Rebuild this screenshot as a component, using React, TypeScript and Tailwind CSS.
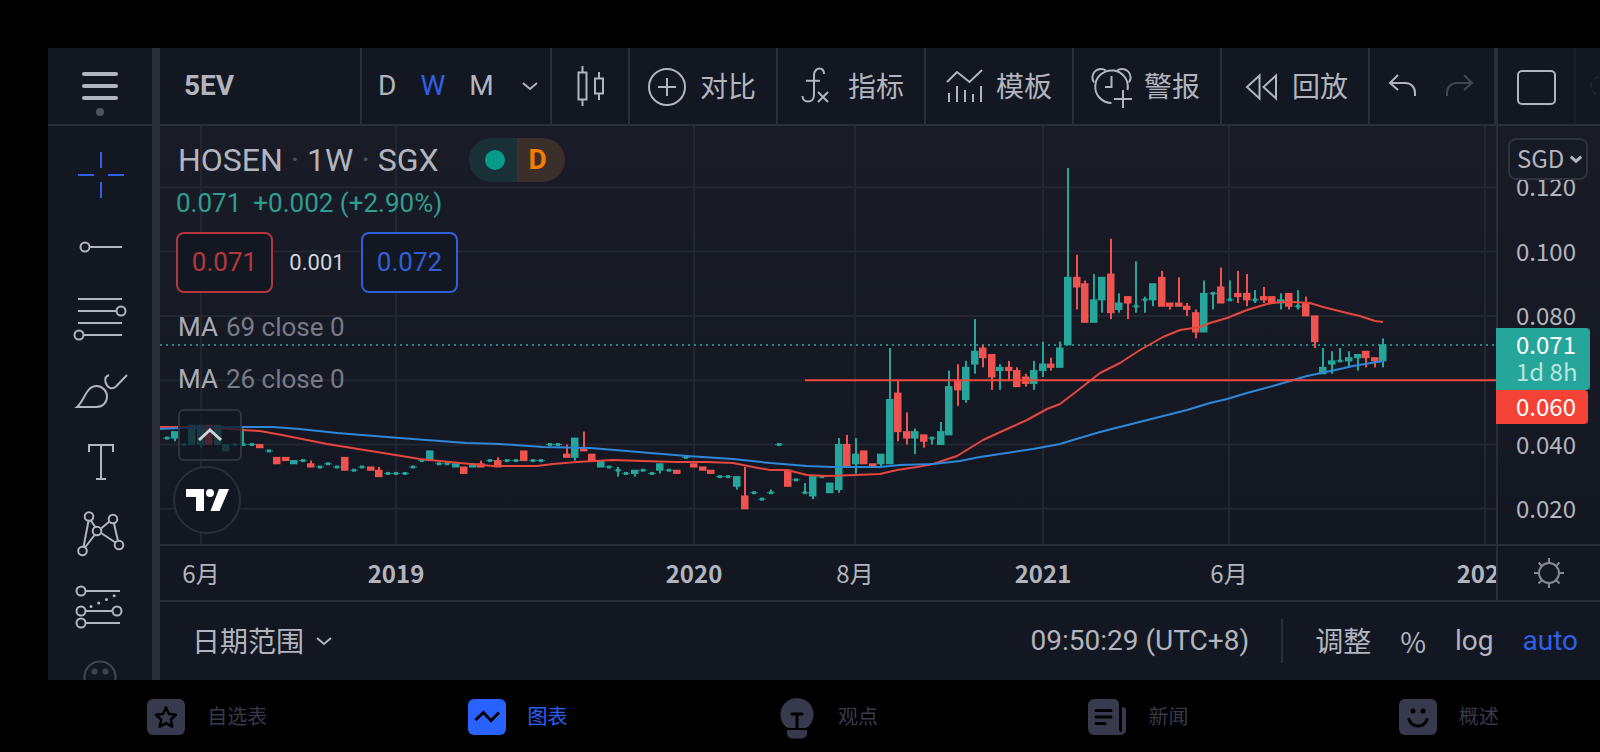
import { useState } from 'react';
import type { ReactNode } from 'react';

const PLOT_W = 1336;
const PLOT_H = 418;
const FIRST_X = 6.8;
const STEP_X = 8.505;

// prices are kept in thousandths
const priceY = (p: number) => 447.1 - 3.215 * p;

// [open, high, low, close]
type Candle = [number, number, number, number];

const flat = (p: number, high = p, low = p): Candle => [p, high, low, p];

const CANDLES: Candle[] = [
  flat(42), [42, 44, 41, 44], flat(40), [40, 46, 40, 46], [40, 46, 39, 46], [46, 46, 40, 40],
  [40, 46, 40, 46], [38, 40, 38, 40], flat(40), flat(40, 45), flat(40), [40, 40, 39, 39],
  flat(38), [36, 36, 34, 34], [36, 36, 35, 35], [34, 35, 34, 35], flat(35), [34, 35, 33, 33],
  flat(33), flat(34), flat(33), [36, 36, 32, 32], flat(32), flat(33), [33, 33, 32, 32],
  [32, 33, 30, 30], flat(31), flat(31), flat(31), flat(33), flat(35), [35, 38, 35, 38],
  flat(34), flat(34), [33, 34, 33, 34], [33, 33, 31, 31], [33, 34, 33, 34], [34, 35, 33, 33],
  flat(35), [35, 36, 33, 33], flat(35), flat(35), [38, 38, 35, 35], flat(35), flat(35),
  flat(40), flat(40), [37, 40, 36, 36], [36, 42, 35, 42], [39, 44, 38, 38], [37, 37, 35, 35],
  [33, 35, 33, 35], flat(33), flat(32, 33, 30), flat(31), [31, 32, 30, 32], flat(32), flat(31),
  [32, 34, 31, 34], flat(32), [32, 32, 31, 31], flat(36), [34, 34, 33, 33], [33, 33, 32, 32],
  [32, 32, 31, 31], flat(30), flat(30), [27, 30, 26, 30], [24, 33, 20, 20], flat(25), flat(23),
  flat(25, 26), flat(40), [32, 32, 27, 27], flat(29), flat(25, 28), [24, 30, 23, 30], flat(30),
  [25, 28, 25, 28], [26, 42, 25, 40], [40, 43, 33, 33], [34, 42, 31, 37], [38, 38, 34, 34],
  [34, 34, 33, 33], [34, 37, 33, 37], [34, 70, 34, 54], [56, 60, 41, 44], [44, 50, 40, 42],
  [42, 45, 37, 44], [43, 43, 39, 41], flat(42, 42, 40), [40, 47, 40, 44], [43, 63, 43, 58],
  [60, 65, 52, 57], [54, 66, 53, 64], [65, 79, 62, 69], [70, 71, 64, 67], [68, 68, 57, 61],
  [63, 65, 57, 64], [64, 66, 60, 63], [63, 64, 58, 58], [61, 62, 58, 59], [59, 66, 57, 63],
  [63, 72, 61, 65], [65, 67, 63, 64], [64, 72, 64, 70], [71, 126, 71, 92], [92, 99, 82, 89],
  [90, 91, 78, 78], [78, 93, 78, 85], [85, 92, 81, 92], [93, 104, 79, 81], [82, 87, 81, 84],
  [86, 86, 79, 84], flat(83, 97, 81), flat(85, 86, 81), [85, 90, 83, 90], [92, 94, 83, 83],
  [84, 84, 82, 83], [84, 92, 83, 83], [83, 84, 80, 82], [81, 82, 73, 75], [75, 91, 75, 87],
  flat(87, 87, 82), [89, 95, 84, 84], flat(85, 91), [87, 94, 84, 86], [87, 93, 83, 85],
  flat(85, 88, 84), [86, 89, 84, 85], [86, 86, 84, 84], [84, 87, 82, 85], [87, 87, 82, 83],
  flat(83, 88, 82), [84, 86, 80, 80], [80, 80, 70, 72], [62, 70, 62, 64], [65, 69, 62, 66],
  flat(66, 70), [66, 69, 64, 67], [67, 68, 63, 68], [69, 69, 64, 67], [67, 67, 64, 66],
  [66, 73, 64, 71],
];

const MA_26 =
  '0,301 18,301 60,302 82,304 100,305 122,309 167,318 217,326 260,333 300,337 333,340 360,340 377,340 393,338 417,336 453,334 483,335 517,336 547,336 573,337 593,341 610,344 627,344 647,349 667,350 695,349 720,348 737,344 757,341 773,338 797,330 823,314 847,303 867,294 887,283 900,278 917,265 940,247 960,237 980,224 1003,211 1020,204 1040,201 1050,197 1067,192 1087,184 1107,178 1120,176 1133,176 1150,177 1163,181 1187,187 1200,190 1215,195 1223,196';
const MA_69 =
  '0,303 18,302 82,301 113,301 140,303 177,307 227,311 253,313 307,317 340,318 383,321 430,322 467,325 490,327 527,330 573,333 610,337 647,340 673,341 720,341 740,339 773,338 800,335 820,331 840,328 873,323 900,318 913,314 940,306 1027,284 1050,277 1067,273 1087,267 1113,260 1147,250 1180,243 1193,240 1223,235';

const PRICE_TICKS = [120, 100, 80, 60, 40, 20];
const TIME_TICKS = [
  { x: 41, label: '6月', bold: false },
  { x: 236, label: '2019', bold: true },
  { x: 534, label: '2020', bold: true },
  { x: 695, label: '8月', bold: false },
  { x: 883, label: '2021', bold: true },
  { x: 1069, label: '6月', bold: false },
  { x: 1325, label: '2022', bold: true },
];

const Chart = () => (
  <svg
    className="absolute inset-0 h-full w-full"
    viewBox={`0 0 ${PLOT_W} ${PLOT_H}`}
    preserveAspectRatio="none"
    role="img"
    aria-label="HOSEN 1W"
  >
    <g stroke="#222631" strokeWidth="2">
      {TIME_TICKS.map((t) => (
        <line key={t.x} x1={t.x} x2={t.x} y1="0" y2={PLOT_H} />
      ))}
      {PRICE_TICKS.map((p) => (
        <line key={p} x1="0" x2={PLOT_W} y1={priceY(p)} y2={priceY(p)} />
      ))}
    </g>
    <line x1="0" x2={PLOT_W} y1="219" y2="219" stroke="#26a69a" strokeOpacity="0.8" strokeWidth="2" strokeDasharray="2 4" />
    {CANDLES.map(([open, high, low, close], i) => {
      const x = Math.round(FIRST_X + STEP_X * i);
      const color = close < open ? '#ef5350' : '#26a69a';
      const top = priceY(Math.max(open, close));
      const bottom = priceY(Math.min(open, close));
      if (open === close) {
        return (
          <g key={i} fill={color}>
            <rect x={x - 4} y={top - 0.5} width="8" height="1" opacity="0.8" />
            <rect x={x - 2} y={top - 1.5} width="4" height="3" />
            <rect x={x - 1} y={priceY(high)} width="2" height={priceY(low) - priceY(high)} />
          </g>
        );
      }
      return (
        <g key={i} fill={color}>
          <rect x={x - 1} y={priceY(high)} width="2" height={priceY(low) - priceY(high)} />
          <rect x={x - 4} y={top - 0.5} width="7.5" height={bottom - top + 1} />
        </g>
      );
    })}
    <polyline points={MA_26} fill="none" stroke="#e5473f" strokeWidth="2" strokeLinejoin="round" />
    <polyline points={MA_69} fill="none" stroke="#2f87d8" strokeWidth="2" strokeLinejoin="round" />
    <line x1="645" x2={PLOT_W} y1={priceY(60)} y2={priceY(60)} stroke="#f04a3f" strokeWidth="2" />
  </svg>
);

const Icon = ({ size = 'tool', children }: { size?: 'tool' | 'bar'; children: ReactNode }) => (
  <svg
    className={size === 'tool' ? 'h-[72px] w-[72px]' : 'h-10 w-10 shrink-0 overflow-visible'}
    viewBox={size === 'tool' ? '0 0 72 72' : '0 0 40 40'}
    fill="none"
    stroke="currentColor"
    strokeWidth="2"
    aria-hidden="true"
  >
    {children}
  </svg>
);

const Chevron = ({ className = 'h-4 w-4', weight = 2 }: { className?: string; weight?: number }) => (
  <svg className={className} viewBox="0 0 16 16" fill="none" stroke="currentColor" strokeWidth={weight} aria-hidden="true">
    <path d="M1 5l7 6 7-6" />
  </svg>
);

const TOOLS = [
  {
    name: '十字线',
    icon: <path d="M37 13v16M37 43v16M14 36h16M44 36h16" />,
  },
  {
    name: '趋势线',
    icon: (
      <>
        <circle cx="21" cy="36" r="4.5" />
        <path d="M26 36h32" />
      </>
    ),
  },
  {
    name: '斐波那契',
    icon: (
      <>
        <path d="M14 16h44M14 28h38M14 40h44M20 52h38" />
        <circle cx="57" cy="28" r="4.5" />
        <circle cx="15" cy="52" r="4.5" />
      </>
    ),
  },
  {
    name: '画笔',
    icon: (
      <path d="M13 52C21 45 22 31 32.500 31c6 0 10.500 5 10.500 10.500S39 52 32.500 52zM45 20q-5 2-3.500 7C43 33 48 35 52 31.500L63 20" />
    ),
  },
  {
    name: '文本',
    icon: <path d="M25 25v-7h24v7M37 18v34M32 52h10" />,
  },
  {
    name: '形态',
    icon: (
      <>
        <path d="M19.500 48L24.500 22M21 48.500L31 35.500M27 21.500l4.500 7M37 29.500l8.500-7M50 24.500l4 17.500M37 34l14.500 9.500" />
        <circle cx="25" cy="17.500" r="4.300" />
        <circle cx="49" cy="20" r="4.300" />
        <circle cx="33" cy="32" r="4.300" />
        <circle cx="55" cy="46" r="4.300" />
        <circle cx="18.500" cy="52" r="4.300" />
      </>
    ),
  },
  {
    name: '预测',
    icon: (
      <>
        <path d="M22 20h34M22 40h26M22 52h34" />
        <path d="M27 35.500L52 24" strokeWidth="3" strokeLinecap="round" strokeDasharray="0 8.500" />
        <circle cx="17" cy="20" r="4.500" />
        <circle cx="17" cy="40" r="4.500" />
        <circle cx="17" cy="52" r="4.500" />
        <circle cx="53" cy="40" r="4.500" />
      </>
    ),
  },
  {
    name: '图标',
    icon: (
      <g stroke="#434651">
        <circle cx="36" cy="34" r="15.500" />
        <circle cx="30.500" cy="28.500" r="2" fill="#363a45" />
        <circle cx="41.500" cy="28.500" r="2" fill="#363a45" />
      </g>
    ),
  },
];

const ACTIONS = [
  {
    label: '对比',
    icon: (
      <>
        <circle cx="21" cy="21" r="18" />
        <path d="M21 12v18M12 21h18" />
      </>
    ),
  },
  {
    label: '指标',
    icon: (
      <path d="M30 8c0-3.500-2-5.500-4.500-5.500S20 5 20 9v20c0 4-2.500 6.500-6 6.500S8.500 33 8.500 30M12 14.700h14M24 26l10 10M34 26L24 36" />
    ),
  },
  {
    label: '模板',
    icon: <path d="M5 16l10-10 12.500 10L40 4M7 27v9M15 20v16M23 24v12M31 28v8M39 20v16" />,
  },
  {
    label: '警报',
    icon: (
      <>
        <path d="M21.500 37A16.300 16.300 0 1 1 37.500 24" />
        <path d="M4 16.500A8.600 8.600 0 0 1 16 4.500M27 4.500A8.600 8.600 0 0 1 39 16.500M21.500 10v11H15M33 24v18M24 33h18" />
      </>
    ),
  },
  {
    label: '回放',
    icon: <path d="M21.500 9.500v23L9 21zM38 9.500v23L25.500 21z" />,
  },
];

const NAV = [
  {
    label: '自选表',
    icon: (
      <>
        <rect y="1" width="38" height="36" rx="6" fill="currentColor" />
        <path d="M19 9.500l3 6.500 7 .8-5.200 4.800 1.400 7-6.200-3.500-6.200 3.500 1.400-7L9 16.800l7-.8z" stroke="#000" strokeWidth="2.500" strokeLinejoin="round" />
      </>
    ),
  },
  {
    label: '图表',
    icon: (
      <>
        <rect y="1" width="38" height="36" rx="6" fill="currentColor" />
        <path d="M7.500 22l8-7.500 7.500 8 8-8" stroke="#000" strokeWidth="3" />
      </>
    ),
  },
  {
    label: '观点',
    icon: (
      <>
        <path d="M19 0a16.500 16.500 0 0 0-11.500 28.500Q9 30 12 30h14q3 0 4.500-1.500A16.500 16.500 0 0 0 19 0zM9 32h20v3.500a5 5 0 0 1-5 5H14a5 5 0 0 1-5-5z" fill="currentColor" />
        <path d="M14 16h10M19 16v13" stroke="#000" strokeWidth="3" strokeLinecap="round" />
      </>
    ),
  },
  {
    label: '新闻',
    icon: (
      <>
        <path d="M6 1h20a5 5 0 0 1 5 5v25a3 3 0 0 0 3 3V9a4 4 0 0 1 4 4v19a5 5 0 0 1-5 5H6a6 6 0 0 1-6-6V7a6 6 0 0 1 6-6z" fill="currentColor" />
        <path d="M8 12.500h15M8 19h15M8 25.500h9" stroke="#000" strokeWidth="3" strokeLinecap="round" />
      </>
    ),
  },
  {
    label: '概述',
    icon: (
      <>
        <rect y="1" width="38" height="36" rx="6" fill="currentColor" />
        <circle cx="14" cy="13" r="2.500" fill="#000" />
        <circle cx="24" cy="13" r="2.500" fill="#000" />
        <path d="M10 21.500q2.500 6.500 9 6.500t9-6.500" stroke="#000" strokeWidth="3" strokeLinecap="round" />
      </>
    ),
  },
];

const Header = () => {
  const [interval, setInterval] = useState('W');

  return (
    <header className="flex h-[78px] border-b-2 border-[#2a2e39] text-[28px]">
      <button type="button" className="w-[200px] shrink-0 pl-6 text-left font-bold">
        5EV
      </button>
      <div className="flex w-[190px] shrink-0 items-center gap-6 border-l-2 border-[#2a2e39] pr-3 pl-4">
        {['D', 'W', 'M'].map((v) => (
          <button
            key={v}
            type="button"
            onClick={() => setInterval(v)}
            className={v === interval ? 'text-[#2f60e6]' : undefined}
          >
            {v}
          </button>
        ))}
        <button type="button" aria-label="更多周期" className="ml-auto">
          <Chevron />
        </button>
      </div>
      <button
        type="button"
        aria-label="K线图"
        className="flex w-[78px] shrink-0 items-center justify-center border-l-2 border-[#2a2e39]"
      >
        <Icon size="bar">
          <path d="M8.500 6.500h8v27h-8zM12.500 0v6.500M12.500 33.500V40M25 12.500h8v15h-8zM29 6v6.500M29 27.500V34" />
        </Icon>
      </button>
      {ACTIONS.map((a) => (
        <button
          key={a.label}
          type="button"
          className="flex w-[148px] shrink-0 items-center gap-[14px] border-l-2 border-[#2a2e39] pl-4 whitespace-nowrap"
        >
          <Icon size="bar">{a.icon}</Icon>
          <span className="pt-1">{a.label}</span>
        </button>
      ))}
      <div className="flex flex-1 items-center gap-4 border-l-2 border-[#2a2e39] pl-3">
        <button type="button" aria-label="撤销">
          <Icon size="bar">
            <path d="M33 30v-3c0-6-4-10-10-10H8M16 9l-8 8 8 7" />
          </Icon>
        </button>
        <button type="button" aria-label="重做" className="text-[#434651]">
          <Icon size="bar">
            <path d="M9 30v-3c0-6 4-10 10-10h15M26 9l8 8-8 7" />
          </Icon>
        </button>
      </div>
      <div className="flex w-[106px] shrink-0 items-center overflow-hidden border-l-4 border-[#2a2e39]">
        <button type="button" aria-label="布局" className="flex h-full w-[78px] shrink-0 items-center justify-center border-r-2 border-[#1a1e29]">
          <Icon size="bar">
            <rect x="2" y="5" width="37" height="33" rx="4" />
          </Icon>
        </button>
        <svg className="ml-3 h-6 w-6 shrink-0 text-[#20242f]" viewBox="0 0 24 24" fill="none" stroke="currentColor" strokeWidth="2" aria-hidden="true">
          <circle cx="12" cy="12" r="9" strokeDasharray="5 4" />
        </svg>
      </div>
    </header>
  );
};

const Legend = () => (
  <div className="relative pt-3 pl-4 whitespace-nowrap">
    <div className="flex h-11 items-center gap-[30px] text-[32px]">
      <h1 className="pl-[2px]">
        HOSEN <span className="text-[#50535e]">·</span> 1W <span className="text-[#50535e]">·</span> SGX
      </h1>
      <div className="flex h-11 overflow-hidden rounded-full text-[28px] font-bold text-[#f57c00]">
        <span className="flex w-12 items-center justify-center bg-[#1a3037] pl-1">
          <span className="h-5 w-5 rounded-full bg-[#089b8a]" />
        </span>
        <span className="flex w-12 items-center bg-[#3b2f2a] pl-3">D</span>
      </div>
    </div>
    <p className="flex h-[42px] items-center gap-3 text-[26px] text-[#2f9e90]">
      <span>0.071</span>
      <span>+0.002 (+2.90%)</span>
    </p>
    <div className="mt-2 flex items-center text-[26px]">
      <button type="button" className="h-[61px] w-[97px] rounded-lg border-2 border-[#b5373c] bg-[#131722] text-[#b5373c]">
        0.071
      </button>
      <span className="w-[88px] text-center text-[22px] text-[#d1d4dc]">0.001</span>
      <button type="button" className="h-[61px] w-[97px] rounded-lg border-2 border-[#305fd8] bg-[#131722] text-[#305fd8]">
        0.072
      </button>
    </div>
    <div className="mt-2 pl-[2px] text-[26px] text-[#787b86]">
      {[69, 26].map((n) => (
        <p key={n} className="flex h-[52px] items-center gap-2">
          <span className="text-[#a9acb6]">MA</span> {n} close 0
        </p>
      ))}
    </div>
    <button
      type="button"
      aria-label="收起"
      className="mt-1 ml-[2px] flex h-[52px] w-16 items-center justify-center rounded-md border-2 border-[#2f333e] bg-[#131722]/75 text-[#d1d4dc]"
    >
      <svg className="h-6 w-6" viewBox="0 0 24 24" fill="none" stroke="currentColor" strokeWidth="3" aria-hidden="true">
        <path d="M1 17L12 7l11 10" />
      </svg>
    </button>
    <a
      href="#tradingview"
      aria-label="TradingView"
      className="mt-[5px] -ml-[3px] flex h-[68px] w-[68px] items-center justify-center rounded-full border-2 border-[#2a2e39] bg-[#131722] text-white"
    >
      <svg className="h-[22px] w-[43px]" viewBox="0 0 43 22" fill="currentColor" aria-hidden="true">
        <path d="M0 0h18v22h-8V8H0zM33 0h10l-9.500 22h-9z" />
        <circle cx="24" cy="4" r="4" />
      </svg>
    </a>
  </div>
);

const PriceAxis = () => (
  <div className="relative w-[104px] shrink-0 border-l-2 border-[#2a2e39] font-['Noto_Sans_CJK_SC',sans-serif] text-2xl">
    {PRICE_TICKS.filter((p) => p !== 60).map((p) => (
      <span
        key={p}
        className="absolute left-[18px] -translate-y-1/2 pb-[3px] leading-6"
        style={{ top: `${(priceY(p) / PLOT_H) * 100}%` }}
      >
        {(p / 1000).toFixed(3)}
      </span>
    ))}
    <button
      type="button"
      className="absolute top-3 left-[10px] flex h-[42px] w-20 items-center gap-[6px] rounded-lg border-2 border-[#2f333e] bg-[#161a25] pl-[7px] leading-8"
    >
      <span className="pb-[3px]">SGD</span>
      <Chevron className="h-3 w-3 shrink-0" weight={4} />
    </button>
    <div className="absolute top-[202px] -left-[2px] w-[94px] rounded-r bg-[#26a69a] pt-[2px] pb-[6px] pl-5 text-white">
      <p className="leading-7">0.071</p>
      <p className="leading-[26px] text-[#b8e4df]">1d 8h</p>
    </div>
    <div className="absolute top-[264px] -left-[2px] w-[92px] rounded-r bg-[#f44336] pt-[2px] pb-1 pl-5 leading-7 text-white">
      0.060
    </div>
  </div>
);

const TimeAxis = () => (
  <div className="flex h-[58px] border-y-2 border-[#2a2e39] font-['Noto_Sans_CJK_SC',sans-serif] text-2xl">
    <div className="relative flex-1 overflow-hidden">
      {TIME_TICKS.map((t) => (
        <span
          key={t.x}
          className={
            t.bold
              ? 'absolute top-[11px] -translate-x-1/2 leading-8 font-bold'
              : 'absolute top-[11px] -translate-x-1/2 leading-8'
          }
          style={{ left: `${(t.x / PLOT_W) * 100}%` }}
        >
          {t.label}
        </span>
      ))}
    </div>
    <button
      type="button"
      aria-label="设置"
      className="flex w-[104px] shrink-0 items-center justify-center border-l-2 border-[#2a2e39] text-[#868993]"
    >
      <svg className="h-8 w-8" viewBox="0 0 32 32" fill="none" stroke="currentColor" strokeWidth="2" aria-hidden="true">
        <circle cx="16" cy="16" r="10" />
        <path d="M16 1v5M16 26v5M1 16h5M26 16h5M5.500 5.500L9 9M23 23l3.500 3.500M5.500 26.500L9 23M23 9l3.500-3.500" />
      </svg>
    </button>
  </div>
);

export default function App() {
  const [tab, setTab] = useState('图表');

  return (
    <div className="flex h-screen min-h-[752px] flex-col overflow-hidden bg-black pt-12 pl-12 font-[Roboto,'Noto_Sans_CJK_SC',sans-serif] text-[#b2b5be]">
      <div className="flex min-h-0 flex-1 bg-[#131722]">
        <aside className="flex w-28 shrink-0 flex-col overflow-hidden border-r-8 border-[#2a2e39]">
          <button
            type="button"
            aria-label="菜单"
            className="flex h-[78px] shrink-0 items-center justify-center border-b-2 border-[#2a2e39]"
          >
            <svg className="h-[52px] w-9 overflow-visible" viewBox="0 0 36 52" aria-hidden="true">
              <path d="M2 14h32M2 26h32M2 38h32" stroke="currentColor" strokeWidth="4" strokeLinecap="round" />
              <circle cx="18" cy="52" r="4" fill="#50535e" />
            </svg>
          </button>
          <div className="flex flex-col items-center overflow-hidden pt-[13px]">
            {TOOLS.map((t, i) => (
              <button
                key={t.name}
                type="button"
                aria-label={t.name}
                className={i === 0 ? 'shrink-0 text-[#2f60e6]' : 'shrink-0'}
              >
                <Icon>{t.icon}</Icon>
              </button>
            ))}
          </div>
        </aside>

        <main className="flex min-w-0 flex-1 flex-col">
          <Header />
          <div className="flex min-h-0 flex-1 bg-linear-to-b from-[#191c27] to-[#131722]">
            <div className="relative min-w-0 flex-1 overflow-hidden">
              <Chart />
              <Legend />
            </div>
            <PriceAxis />
          </div>
          <TimeAxis />
          <footer className="flex h-[78px] items-center pr-[22px] pl-8 text-[28px]">
            <button type="button" className="flex items-center gap-3">
              <span className="pt-1">日期范围</span>
              <Chevron />
            </button>
            <button type="button" className="ml-auto">
              09:50:29 (UTC+8)
            </button>
            <div className="mr-8 ml-8 h-11 w-[2px] bg-[#2a2e39]" />
            <div className="flex items-center gap-[29px]">
              <button type="button" className="pt-1">
                调整
              </button>
              <button type="button" className="font-['Noto_Sans_CJK_SC',sans-serif]">
                %
              </button>
              <button type="button">log</button>
              <button type="button" className="text-[#2f60e6]">
                auto
              </button>
            </div>
          </footer>
        </main>
      </div>

      <nav className="-mr-1 grid h-[72px] shrink-0 grid-cols-5 pt-[2px] pl-1 text-xl">
        {NAV.map((n) => (
          <button
            key={n.label}
            type="button"
            onClick={() => setTab(n.label)}
            className={
              n.label === tab
                ? 'flex items-center justify-center gap-[22px] text-[#2962ff]'
                : 'flex items-center justify-center gap-[22px] text-[#363a4c]'
            }
          >
            <svg className="h-[38px] w-[38px] overflow-visible" viewBox="0 0 38 38" fill="none" aria-hidden="true">
              {n.icon}
            </svg>
            {n.label}
          </button>
        ))}
      </nav>
    </div>
  );
}
